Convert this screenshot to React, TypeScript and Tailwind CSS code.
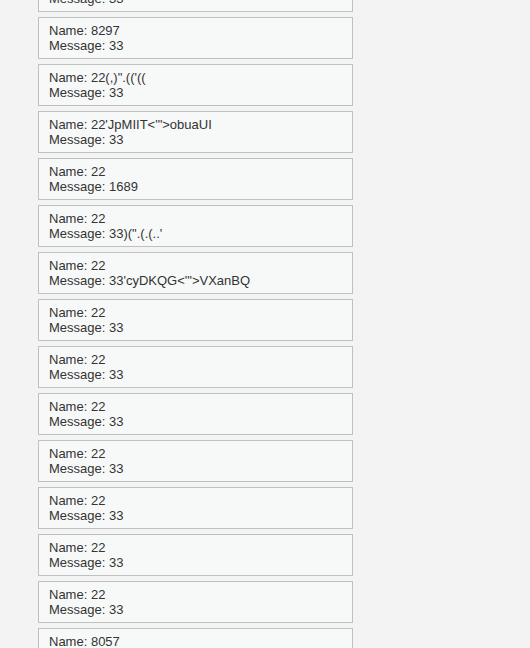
import React from "react";

const items: { name: string; message: string }[] = [
  { name: "22", message: "33" },
  { name: "8297", message: "33" },
  { name: "22(,)\".(('((", message: "33" },
  { name: "22'JpMIIT<'\">obuaUI", message: "33" },
  { name: "22", message: "1689" },
  { name: "22", message: "33)(\".(.(..'" },
  { name: "22", message: "33'cyDKQG<'\">VXanBQ" },
  { name: "22", message: "33" },
  { name: "22", message: "33" },
  { name: "22", message: "33" },
  { name: "22", message: "33" },
  { name: "22", message: "33" },
  { name: "22", message: "33" },
  { name: "22", message: "33" },
  { name: "8057", message: "33" },
];

export default function App() {
  return (
    <div
      className="min-h-[648px] h-[648px] overflow-hidden bg-[#f3f3f3] text-[#333333] text-[13px]"
      style={{ fontFamily: '"Liberation Sans", Arial, sans-serif' }}
    >
      <div className="mt-[-30px] pl-[38px] flex flex-col gap-[5px]">
        {items.map((it, i) => (
          <div
            key={i}
            className="w-[315px] border border-[#c0c0c0] bg-[#f7f9f9] px-[10px] py-[5px] leading-[15px]"
          >
            <div className="whitespace-pre">Name: {it.name}</div>
            <div className="whitespace-pre">Message: {it.message}</div>
          </div>
        ))}
      </div>
    </div>
  );
}
